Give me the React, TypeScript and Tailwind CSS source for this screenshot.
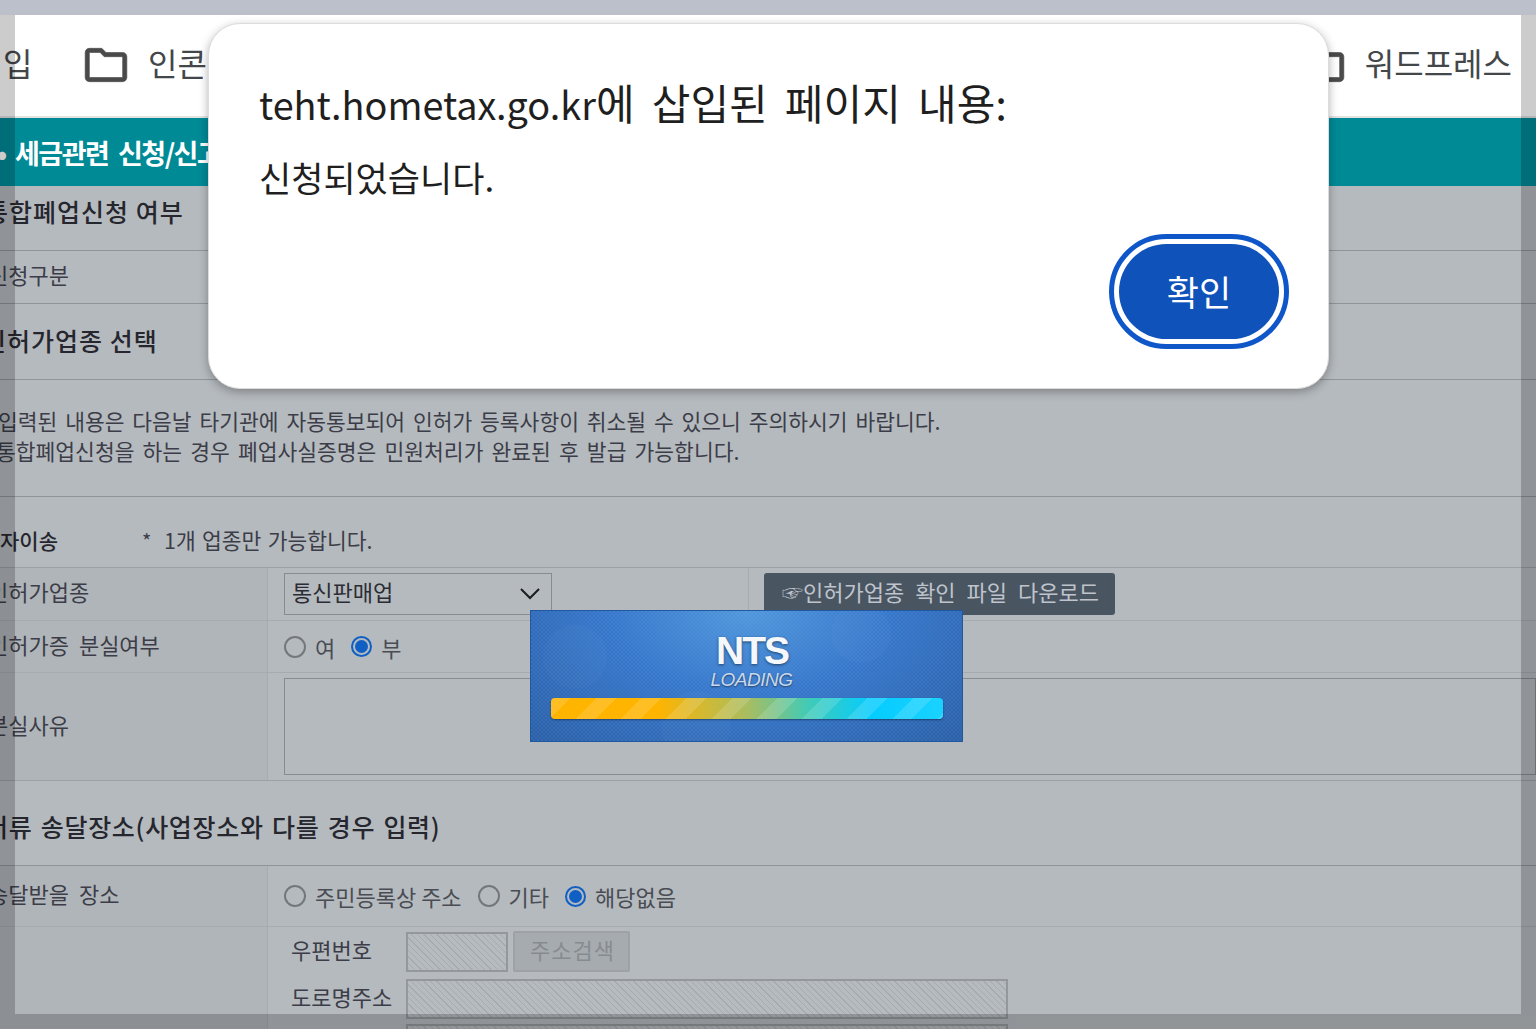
const font = { fontFamily: '"Noto Sans CJK KR", "Noto Sans", sans-serif' };
const latin = { fontFamily: '"Liberation Sans", sans-serif' };

function FolderIcon({ className }: { className?: string }) {
  return (
    <svg viewBox="0 0 24 24" className={className} fill="#4a4a4a" stroke="#4a4a4a" strokeWidth="0.3" strokeLinejoin="round">
      <path d="M9.17 6l2 2H20v10H4V6h5.17M10 4H4c-1.1 0-1.99.9-1.99 2L2 18c0 1.1.9 2 2 2h16c1.1 0 2-.9 2-2V8c0-1.1-.9-2-2-2h-8l-2-2z" />
    </svg>
  );
}

function Radio({ checked, label }: { checked?: boolean; label: string }) {
  return (
    <span className="flex items-center gap-[9px]">
      {checked ? (
        <span className="flex h-[21px] w-[21px] items-center justify-center rounded-full border-2 border-[#0f5fc4]">
          <span className="h-[13px] w-[13px] rounded-full bg-[#0f5fc4]" />
        </span>
      ) : (
        <span className="h-[22px] w-[22px] rounded-full border-2 border-[#74787c]" />
      )}
      <span className="text-[22px] leading-none text-[#4a4c54]">{label}</span>
    </span>
  );
}

function HatchInput({ className }: { className: string }) {
  return (
    <div
      className={`border-2 border-[#94989c] bg-[repeating-linear-gradient(45deg,#a6abaf_0px,#a6abaf_1px,#b6bbbf_1px,#b6bbbf_4.5px)] ${className}`}
    />
  );
}

function SectionRow({ height, children }: { height: string; children: React.ReactNode }) {
  return (
    <div className={`flex items-center border-b border-[#8f9498] text-[25px] font-medium tracking-[1px] text-[#26262e] ${height}`}>
      {children}
    </div>
  );
}

function FormRow({
  label,
  height,
  children,
  line = 'border-[#a6abaf]',
}: {
  label?: string;
  height: string;
  children: React.ReactNode;
  line?: string;
}) {
  return (
    <div className={`flex border-b ${line} ${height}`}>
      <div className="flex w-[280px] shrink-0 items-center border-r border-[#a6abaf] bg-[#b0b5b9] pb-[5px] text-[22px] text-[#3c3d48] [word-spacing:5px]">
        {label}
      </div>
      <div className="min-w-0 flex-1">{children}</div>
    </div>
  );
}

function LoadingBox() {
  return (
    <div className="absolute left-[530px] top-[610px] flex h-[132px] w-[433px] flex-col items-center overflow-hidden border border-[#2258a0] bg-[radial-gradient(ellipse_at_50%_0%,#4f97dc_0%,#3677cc_45%,#2a60a8_100%)]">
      <div className="absolute inset-0 bg-[repeating-conic-gradient(rgba(255,255,255,0.05)_0_25%,rgba(255,255,255,0)_0_50%)] bg-[length:4px_4px]" />
      <span className="absolute left-[12px] top-[14px] h-[64px] w-[64px] rounded-full bg-white/[0.025]" />
      <span className="absolute left-[300px] top-[-8px] h-[60px] w-[60px] rounded-full bg-white/[0.025]" />
      <span className="absolute left-[130px] top-[80px] h-[70px] w-[70px] rounded-full bg-white/[0.025]" />
      <span
        className="relative mt-[21px] pl-[11px] text-[39px] font-bold leading-[37px] tracking-[-2px] text-[#f4f7fb] [text-shadow:0_1px_3px_rgba(0,0,0,0.5)]"
        style={latin}
      >
        NTS
      </span>
      <span
        className="relative pl-[10px] text-[19px] italic leading-[21px] tracking-[-0.5px] text-[#c9d8ea] [text-shadow:0_1px_2px_rgba(0,0,0,0.5)]"
        style={latin}
      >
        LOADING
      </span>
      <div className="relative mt-[8px] h-[21px] w-[392px] overflow-hidden rounded-[4px] bg-[linear-gradient(90deg,#ffb400_0%,#ffb400_27%,#a9bd60_50%,#3fcbb8_66%,#05ccff_82%,#1ad2ff_100%)] shadow-[0_1px_2px_rgba(0,0,0,0.4)]">
        <div className="h-full w-full bg-[repeating-linear-gradient(135deg,rgba(255,255,255,0.14)_0px,rgba(255,255,255,0.14)_14px,rgba(255,255,255,0)_14px,rgba(255,255,255,0)_32px)]" />
      </div>
    </div>
  );
}

function AlertDialog() {
  return (
    <div className="absolute left-[208px] top-[23px] flex h-[366px] w-[1121px] flex-col rounded-[32px] border border-[#dcdcdc] bg-white pl-[50px] pr-[39px] pt-[50px] text-[#1f1f1f] shadow-[0_3px_10px_rgba(0,0,0,0.3)]">
      <div className="text-[42px] leading-[56px] [word-spacing:7.8px]">
        <span className="text-[37.8px]">teht.hometax.go.kr</span>에 삽입된 페이지 내용:
      </div>
      <div className="mt-[21px] text-[35px] leading-[48px]">신청되었습니다.</div>
      <div className="mt-[33px] flex justify-end">
        <button className="flex h-[115px] w-[180px] items-center justify-center rounded-full border-[5px] border-[#0f57c8] bg-white">
          <span className="flex h-[95px] w-[160px] items-center justify-center rounded-full bg-[#0f52ba] text-[35px] text-white">
            확인
          </span>
        </button>
      </div>
    </div>
  );
}

export default function App() {
  return (
    <div className="relative h-[1029px] w-[1536px] overflow-hidden bg-[#b5babe]" style={font}>
      {/* browser top strip */}
      <div className="h-[15px] bg-[#ebf0fe]" />

      {/* bookmark bar */}
      <div className="flex h-[103px] items-center border-b-2 border-[#e3e3e3] bg-white pb-[8px] text-[32px] text-[#44474a]">
        <span className="ml-[3px] w-[78px]">입</span>
        <FolderIcon className="mt-[7px] h-[50px] w-[50px]" />
        <span className="ml-[17px]">인콘스</span>
        <div className="flex-1" />
        <FolderIcon className="mt-[7px] h-[50px] w-[50px]" />
        <span className="ml-[17px] mr-[24px]">워드프레스</span>
      </div>

      {/* title bar */}
      <div className="flex h-[68px] items-center bg-[#008a96] pt-[2px] text-[27px] font-bold tracking-[-1.5px] text-white [word-spacing:5px]">
        <span className="-ml-[3px] w-[18px] text-[27px]">•</span>
        <span>세금관련 신청/신고</span>
      </div>

      <div className="-ml-3 w-[1548px]">
        <SectionRow height="h-[65px]">
          <span className="-ml-[3px] pb-[13px]">통합폐업신청 여부</span>
        </SectionRow>
        <div className="flex h-[53px] items-center border-b border-[#8f9498] pb-[5px] text-[22px] text-[#3c3d48]">신청구분</div>
        <SectionRow height="h-[76px]">
          <span className="-ml-[5px] pb-[2px]">인허가업종 선택</span>
        </SectionRow>
        <div className="h-[117px] border-b border-[#8f9498] pt-[26px] text-[21.5px] leading-[30px] text-[#3c3d48]">
          <div className="ml-[10px] [word-spacing:3px]">입력된 내용은 다음날 타기관에 자동통보되어 인허가 등록사항이 취소될 수 있으니 주의하시기 바랍니다.</div>
          <div className="ml-[8px] [word-spacing:3.3px]">통합폐업신청을 하는 경우 폐업사실증명은 민원처리가 완료된 후 발급 가능합니다.</div>
        </div>
        <div className="flex h-[71px] items-center border-b border-[#9ca1a5] pt-[17px]">
          <span className="ml-[12px] w-[142px] text-[21px] font-medium text-[#26262e]">자이송</span>
          <span className="w-[22px] text-[20px] text-[#3c3d48]">*</span>
          <span className="text-[21.5px] text-[#3c3d48] [word-spacing:1.5px]">1개 업종만 가능합니다.</span>
        </div>

        <FormRow label="인허가업종" height="h-[53px]">
          <div className="flex h-full">
            <div className="flex w-[481px] items-start border-r border-[#a6abaf] pl-[16px] pt-[5px]">
              <div className="flex h-[42px] w-[268px] items-center justify-between border border-[#888c90] pl-[7px] pr-[11px] text-[22px] text-[#2c2d34]">
                <span className="pb-[5px]">통신판매업</span>
                <svg viewBox="0 0 20 12" className="h-[12px] w-[20px]" fill="none" stroke="#1c1c1c" strokeWidth="2">
                  <path d="M1 1l9 9 9-9" />
                </svg>
              </div>
            </div>
            <div className="pl-[15px] pt-[5px]">
              <div className="flex h-[42px] w-[351px] items-center rounded-[3px] bg-[#4a5562] pb-[5px] pl-[18px] text-[22px] text-[#bfc4cc] [word-spacing:6px]">
                <span className="w-[21px] text-[21px]">☞</span>
                <span>인허가업종 확인 파일 다운로드</span>
              </div>
            </div>
          </div>
        </FormRow>
        <FormRow label="인허가증 분실여부" height="h-[52px]">
          <div className="flex h-full items-center gap-[16px] pl-[16px]">
            <Radio label="여" />
            <Radio checked label="부" />
          </div>
        </FormRow>
        <FormRow label="분실사유" height="h-[108px]" line="border-[#9ca1a5]">
          <div className="pl-[16px] pt-[5px]">
            <div className="h-[97px] border border-[#888c90]" />
          </div>
        </FormRow>
        <SectionRow height="h-[85px]">
          <span className="-ml-[3px] pt-[8px] tracking-[0.7px] [word-spacing:2px]">서류 송달장소(사업장소와 다를 경우 입력)</span>
        </SectionRow>
        <FormRow label="송달받을 장소" height="h-[61px]">
          <div className="flex h-full items-center gap-[16px] pl-[16px]">
            <Radio label="주민등록상 주소" />
            <Radio label="기타" />
            <Radio checked label="해당없음" />
          </div>
        </FormRow>
        <FormRow height="h-[140px]">
          <div className="pl-[23px] pt-[4px] text-[22px] text-[#3c3d48]">
            <div className="flex h-[41px] items-center">
              <span className="w-[115px] pb-[5px]">우편번호</span>
              <HatchInput className="h-[40px] w-[102px]" />
              <span className="ml-[5px] flex h-[41px] w-[117px] items-center justify-center rounded-[2px] border-2 border-[#9ea2a6] bg-[#a6abaf] pb-[5px] pl-[2px] tracking-[1px] text-[#878b90]">
                주소검색
              </span>
            </div>
            <div className="mt-[7px] flex h-[40px] items-center">
              <span className="w-[115px] pb-[5px]">도로명주소</span>
              <HatchInput className="h-[40px] w-[602px]" />
            </div>
            <div className="ml-[115px] mt-[5px]">
              <HatchInput className="h-[40px] w-[602px]" />
            </div>
          </div>
        </FormRow>
      </div>

      {/* dim frame around the captured window */}
      <div className="absolute inset-x-0 top-0 h-[15px] bg-black/20" />
      <div className="absolute bottom-[15px] left-0 top-[15px] w-[15px] bg-black/20" />
      <div className="absolute bottom-[15px] right-0 top-[15px] w-[15px] bg-black/20" />
      <div className="absolute inset-x-0 bottom-0 h-[15px] bg-black/20" />

      <LoadingBox />
      <AlertDialog />
    </div>
  );
}
